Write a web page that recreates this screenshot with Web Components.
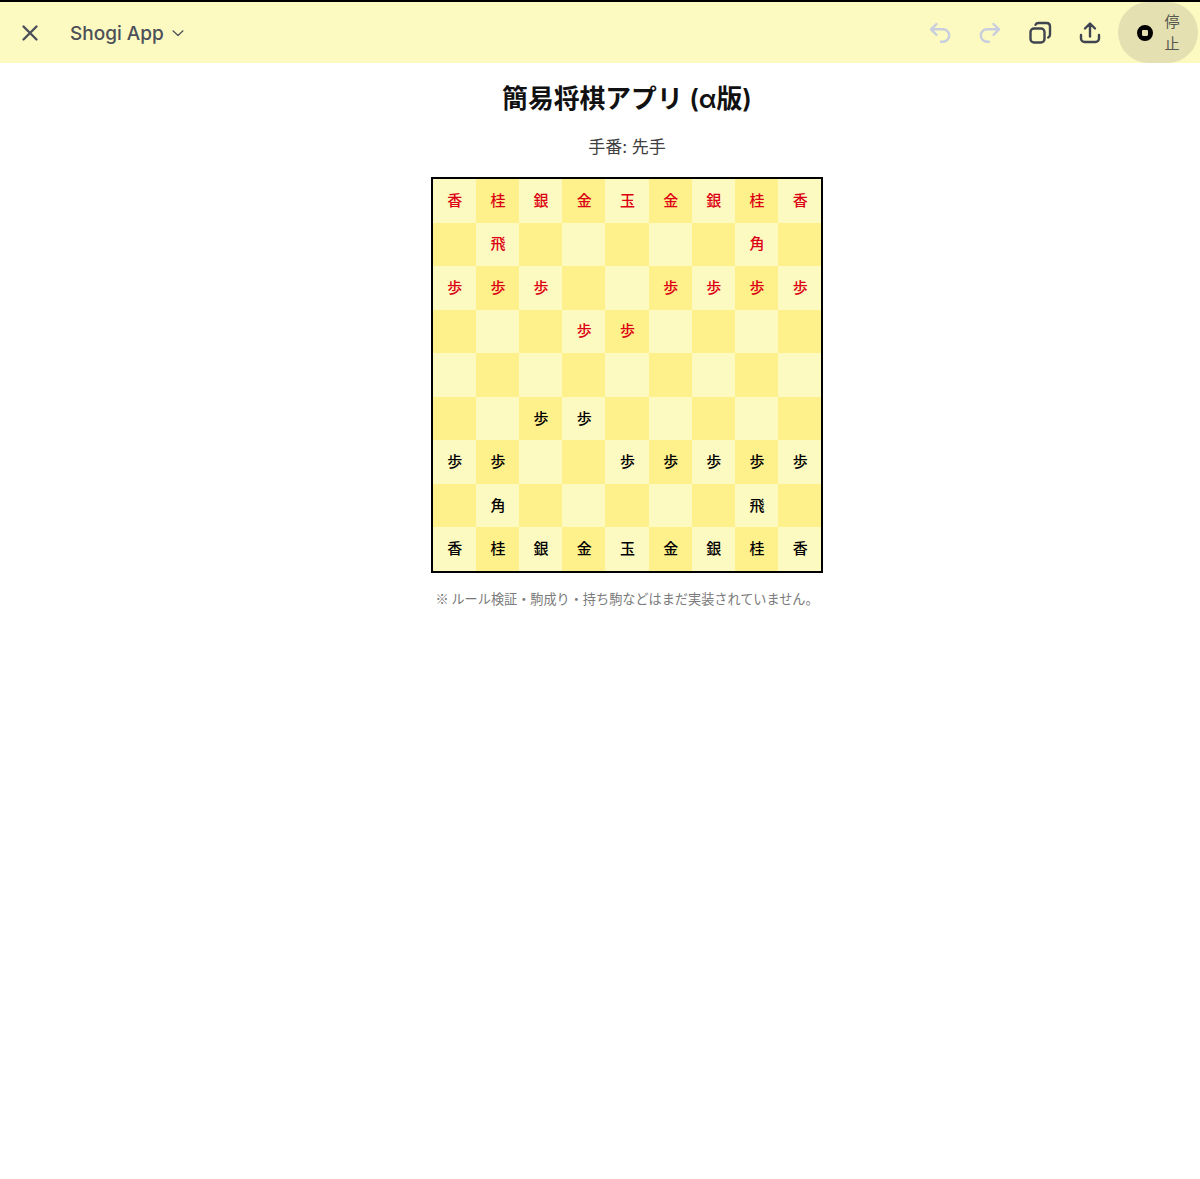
<!DOCTYPE html>
<html lang="ja">
<head>
<meta charset="utf-8">
<title>Shogi App</title>
<style>
  html, body { margin: 0; padding: 0; background: #fff; }
  body { font-family: Inter, "Noto Sans CJK JP", sans-serif; min-height: 1179px; }
</style>
</head>
<body>
<app-bar></app-bar>
<shogi-game></shogi-game>
<script>
class AppBar extends HTMLElement {
  constructor() {
    super();
    this.attachShadow({ mode: 'open' });
  }

  connectedCallback() {
    this.shadowRoot.innerHTML = `
      <style>
        :host {
          display: flex;
          align-items: center;
          height: 61px;
          border-top: 2px solid #000;
          background: #fdfac1;
          color: #4b4f58;
        }
        .close { width: 59px; display: flex; justify-content: center; }
        .title {
          display: flex;
          align-items: center;
          gap: 8px;
          margin: 1px 0 0 11px;
          font-size: 19px;
          font-weight: 500;
        }
        .tools { margin-left: auto; display: flex; align-items: center; }
        .tool { width: 50px; display: flex; justify-content: center; color: #3f4450; }
        .tool.off { color: #c8cede; }
        .stop {
          display: flex;
          align-items: center;
          width: 80px;
          height: 61px;
          margin: 0 2px 0 3px;
          padding-left: 19px;
          gap: 11px;
          box-sizing: border-box;
          border-radius: 31px;
          background: #e5e0b1;
        }
        .stop span {
          width: 16px;
          margin-top: -2px;
          font: 15px/22px "Noto Sans CJK JP", sans-serif;
          color: #55564e;
          text-align: center;
        }
        svg { display: block; fill: none; stroke: currentColor; stroke-width: 2.4; stroke-linecap: round; stroke-linejoin: round; }
      </style>
      <div class="close">
        <svg width="24" height="24" viewBox="0 0 24 24"><path d="M5.500 5.500l13 13M18.500 5.500l-13 13"/></svg>
      </div>
      <div class="title">
        <span>Shogi App</span>
        <svg width="12" height="14" viewBox="0 0 12 14" style="stroke-width:1.2"><path d="M1 4.800l5 4.700 5-4.700"/></svg>
      </div>
      <div class="tools">
        <div class="tool off">
          <svg width="24" height="24" viewBox="0 0 24 24"><path d="M8.500 3L3 8.300l5.500 5.500M3 8.300H15a6.200 6.200 0 0 1 0 12.400h-2"/></svg>
        </div>
        <div class="tool off">
          <svg width="24" height="24" viewBox="0 0 24 24"><path d="M15.500 3L21 8.300l-5.500 5.500M21 8.300H9a6.200 6.200 0 0 0 0 12.400h2"/></svg>
        </div>
        <div class="tool">
          <svg width="24" height="24" viewBox="0 0 24 24"><rect x="2.500" y="7.500" width="14" height="14" rx="3.500"/><path d="M7.500 3.800c.5-1 1.500-1.800 3-1.800h8c2 0 3.500 1.500 3.500 3.500v8c0 1.500-.8 2.500-1.800 3"/></svg>
        </div>
        <div class="tool">
          <svg width="24" height="24" viewBox="0 0 24 24"><path d="M12 15.500V3M7 7.500L12 2.500l5 5M3 14v3.500a3.500 3.500 0 0 0 3.500 3.500h11a3.500 3.500 0 0 0 3.500-3.500V14"/></svg>
        </div>
        <div class="stop">
          <svg width="16" height="16" viewBox="0 0 16 16" style="stroke:none"><path fill="#000" fill-rule="evenodd" d="M8 0a8 8 0 1 1 0 16A8 8 0 0 1 8 0zM6.200 5C5.500 5 5 5.500 5 6.200v3.600C5 10.500 5.500 11 6.200 11h3.600c.7 0 1.200-.5 1.200-1.200V6.200C11 5.500 10.500 5 9.800 5z"/></svg>
          <span>停止</span>
        </div>
      </div>
    `;
  }
}

class ShogiBoard extends HTMLElement {
  constructor() {
    super();
    this.attachShadow({ mode: 'open' });
  }

  connectedCallback() {
    // 1-9 rows from the gote side, blank = no piece
    const rows = [
      '香桂銀金玉金銀桂香',
      ' 飛     角 ',
      '歩歩歩  歩歩歩歩',
      '   歩歩    ',
      '         ',
      '  歩歩     ',
      '歩歩  歩歩歩歩歩',
      ' 角     飛 ',
      '香桂銀金玉金銀桂香',
    ];
    const cells = rows.map((row, r) => [...row].map((piece, c) => {
      const tone = (r + c) % 2 === 0 ? 'light' : 'dark';
      const side = r < 4 ? 'gote' : 'sente';
      return `<div class="cell ${tone} ${side}"><span>${piece.trim()}</span></div>`;
    }).join('')).join('');
    this.shadowRoot.innerHTML = `
      <style>
        :host {
          display: grid;
          grid-template-columns: repeat(9, 43.2px);
          grid-template-rows: repeat(9, 43.55px);
          border: 2px solid #000;
        }
        .cell {
          display: flex;
          align-items: center;
          justify-content: center;
          padding: 0 0 3px 1px;
          box-sizing: border-box;
          font: 500 15px "Noto Sans CJK JP", sans-serif;
        }
        .light { background: #fdfac1; }
        .dark { background: #fef08a; }
        .gote { color: #dc0014; }
        .sente { color: #000; }
      </style>
      ${cells}
    `;
  }
}

class ShogiGame extends HTMLElement {
  constructor() {
    super();
    this.attachShadow({ mode: 'open' });
  }

  connectedCallback() {
    this.shadowRoot.innerHTML = `
      <style>
        :host {
          display: flex;
          flex-direction: column;
          align-items: center;
          padding-left: 54px;
          font-family: Inter, "Noto Sans CJK JP", sans-serif;
        }
        h1 {
          margin: 18px 0 0;
          font-size: 25.8px;
          line-height: 36px;
          font-weight: 600;
          color: #111;
        }
        .turn {
          margin: 18px 0 0;
          font-size: 17px;
          line-height: 24px;
          color: #404040;
        }
        shogi-board { margin-top: 18px; }
        .note {
          margin: 16px 0 0;
          font-size: 13.15px;
          line-height: 20px;
          color: #7a7a7a;
          font-family: "Noto Sans CJK JP", sans-serif;
        }
      </style>
      <h1>簡易将棋アプリ (α版)</h1>
      <p class="turn">手番: 先手</p>
      <shogi-board></shogi-board>
      <p class="note">※ ルール検証・駒成り・持ち駒などはまだ実装されていません。</p>
    `;
  }
}

customElements.define('app-bar', AppBar);
customElements.define('shogi-board', ShogiBoard);
customElements.define('shogi-game', ShogiGame);
</script>
</body>
</html>
